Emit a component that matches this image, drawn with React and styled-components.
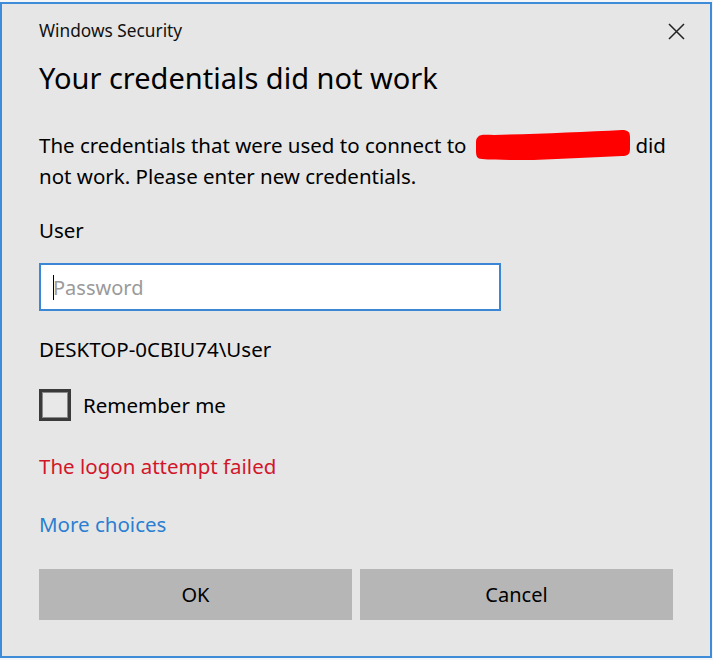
import React from "react";
import styled, { createGlobalStyle } from "styled-components";

const Global = createGlobalStyle`
  html, body { margin: 0; padding: 0; background: #f4f6f8; }
  body { font-family: "Noto Sans", "Open Sans", sans-serif; }
  * { box-sizing: border-box; }
`;

const Dialog = styled.div`
  margin-top: 2px;
  width: 712px;
  height: 656px;
  border: 2px solid #3d8bd9;
  background: #e6e6e6;
  padding: 17px 37px 0 37px;
  color: #000;
  font-family: "Noto Sans", "Open Sans", sans-serif;
`;

const TitleRow = styled.div`
  display: flex;
  align-items: center;
  justify-content: space-between;
  height: 20px;
`;

const Caption = styled.div`
  font-size: 17.3px;
  line-height: 20px;
  color: #111;
`;

const Close = styled.button`
  border: 0;
  background: none;
  padding: 0;
  margin-right: -12px;
  width: 17px;
  height: 17px;
  display: flex;
  cursor: pointer;
`;

const Heading = styled.h1`
  margin: 21px 0 0 0;
  font-size: 29px;
  line-height: 32px;
  font-weight: 400;
  color: #000;
`;

const Text = styled.p`
  margin: ${(p) => p.$mt}px 0 0 0;
  font-size: 20.5px;
  line-height: ${(p) => p.$lh || 30}px;
  color: ${(p) => p.$color || "#000"};
`;

const Redacted = styled.span`
  display: inline-block;
  width: 158px;
  height: 32px;
  margin: 0 3px 0 8px;
  vertical-align: -8px;
`;

const Link = styled.a`
  display: block;
  margin-top: 28px;
  font-size: 20.5px;
  line-height: 30px;
  color: #2a7fd2;
  text-decoration: none;
  cursor: pointer;
`;

const Field = styled.div`
  position: relative;
  margin-top: 18px;
  width: 462px;
  height: 48px;
`;

const Input = styled.input`
  width: 100%;
  height: 100%;
  border: 2px solid #3b87d6;
  background: #fff;
  padding: 0 12px;
  font-family: inherit;
  font-size: 20px;
  outline: none;
  &::placeholder { color: #9a9a9a; }
`;

const Caret = styled.span`
  position: absolute;
  left: 14px;
  top: 12px;
  width: 1px;
  height: 25px;
  background: #000;
`;

const CheckRow = styled.label`
  margin-top: 25px;
  display: flex;
  align-items: center;
  gap: 12px;
  height: 32px;
  font-size: 20.5px;
  cursor: pointer;
`;

const Box = styled.span`
  width: 32px;
  height: 32px;
  border: 3px solid #3a3a3a;
  box-shadow: inset 0 0 0 1px #8a8a8a;
  background: #e8e8e8;
`;

const Buttons = styled.div`
  margin-top: 30px;
  display: flex;
  gap: 8px;
`;

const Button = styled.button`
  flex: 1;
  height: 51px;
  border: 0;
  background: #b6b6b6;
  font-family: inherit;
  font-size: 20px;
  color: #000;
  cursor: pointer;
`;

export default function App() {
  return (
    <>
      <Global />
      <Dialog>
        <TitleRow>
          <Caption>Windows Security</Caption>
          <Close aria-label="Close">
            <svg width="17" height="17" viewBox="0 0 17 17">
              <path d="M1 1 L16 16 M16 1 L1 16" stroke="#222" strokeWidth="1.5" fill="none" />
            </svg>
          </Close>
        </TitleRow>
        <Heading>Your credentials did not work</Heading>
        <Text $mt={35}>
          The credentials that were used to connect to
          <Redacted>
            <svg width="158" height="32" viewBox="0 0 158 32">
              <path
                d="M4 8 C6 5 12 6 20 6 C60 5 110 3 148 1 C154 1 156 3 156 8 L156 20 C156 26 153 27 148 27 C120 28 90 30 60 31 C40 31 20 31 8 30 C3 30 2 27 2 22 L2 13 C2 10 3 9 4 8 Z"
                fill="#ff0000"
              />
            </svg>
          </Redacted>
          did
          <br />
          not work. Please enter new credentials.
        </Text>
        <Text $mt={24}>User</Text>
        <Field>
          <Input type="password" placeholder="Password" />
          <Caret />
        </Field>
        <Text $mt={23}>DESKTOP-0CBIU74\User</Text>
        <CheckRow>
          <Box />
          Remember me
        </CheckRow>
        <Text $mt={30} $color="#d2162a">The logon attempt failed</Text>
        <Link>More choices</Link>
        <Buttons>
          <Button>OK</Button>
          <Button>Cancel</Button>
        </Buttons>
      </Dialog>
    </>
  );
}
